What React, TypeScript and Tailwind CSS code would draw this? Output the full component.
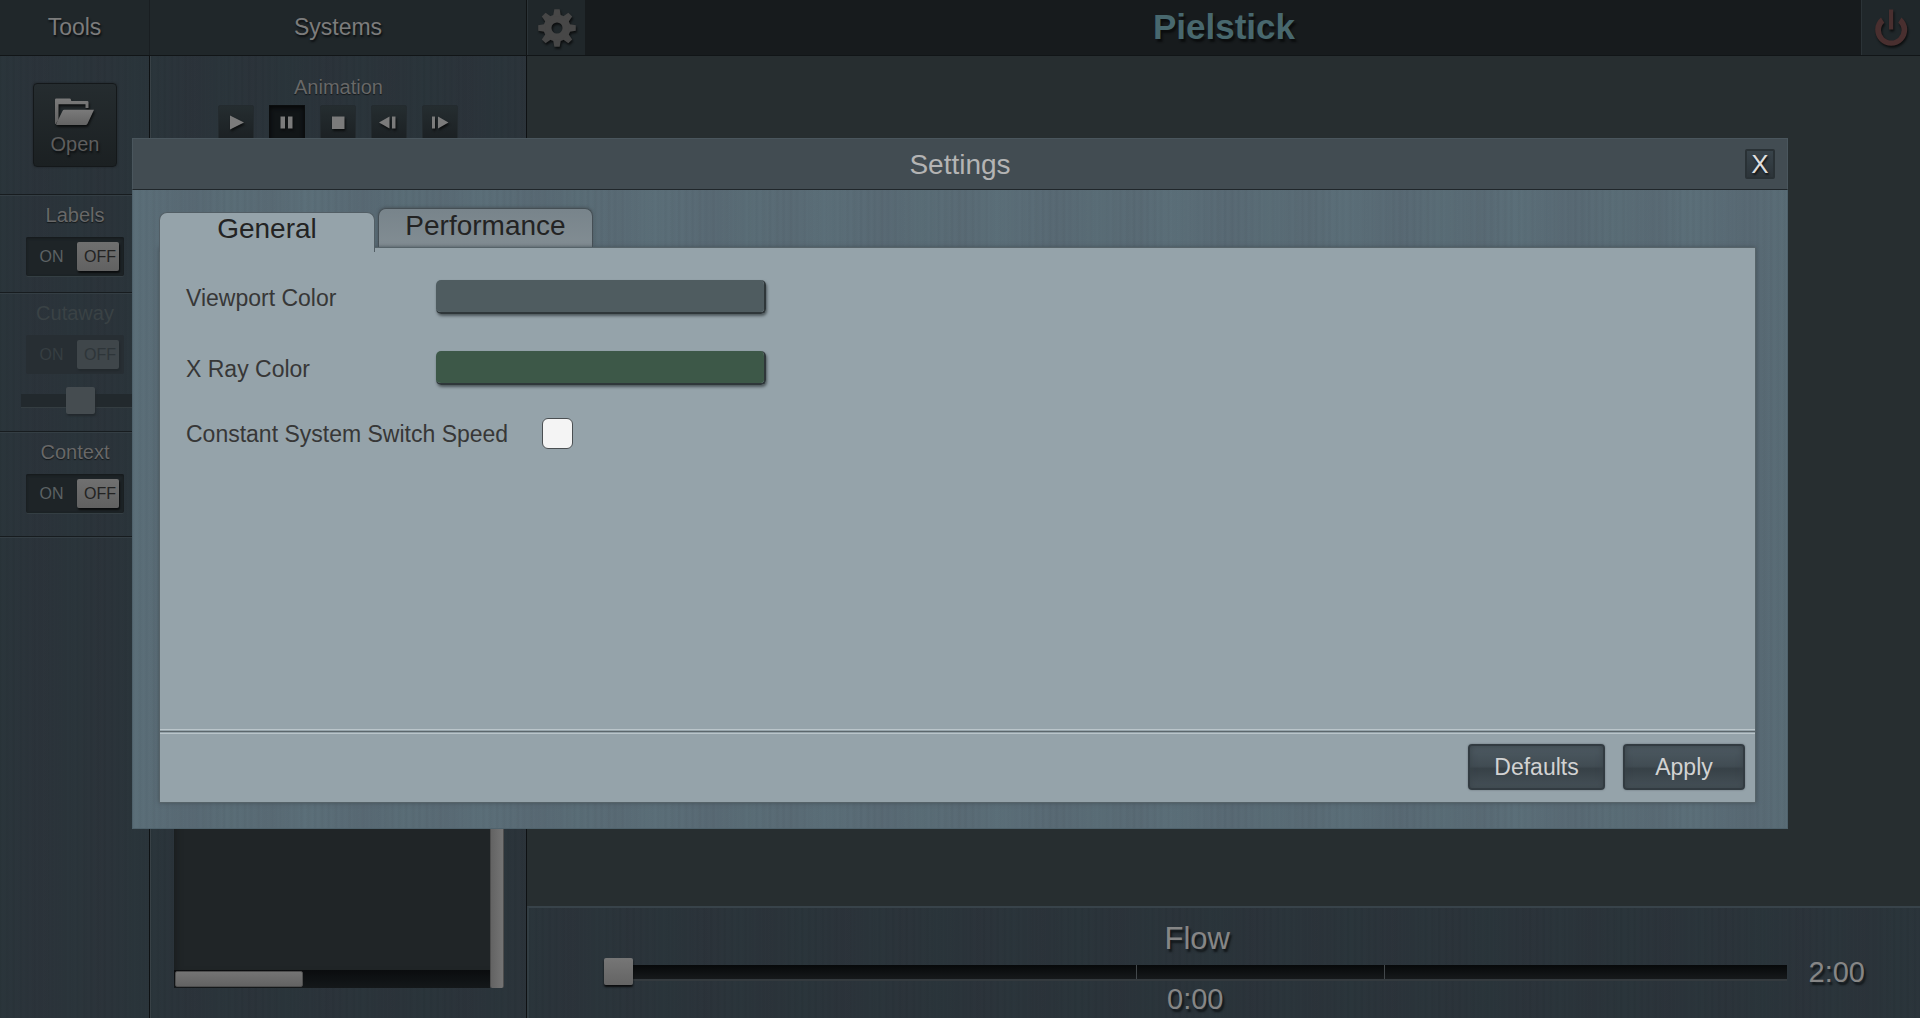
import React, { useState } from 'react';

const BRUSHED_DARK =
  'bg-[#2b343a] bg-[repeating-linear-gradient(90deg,rgba(36,62,68,0.1)_0px,rgba(46,46,60,0.14)_41px,rgba(40,62,70,0.1)_73px,rgba(46,46,60,0.1)_101px,rgba(36,62,68,0.1)_137px),repeating-linear-gradient(90deg,rgba(0,0,0,0.03)_0px,rgba(0,0,0,0)_2px,rgba(0,0,0,0)_5px,rgba(0,0,0,0.03)_7px),repeating-linear-gradient(90deg,rgba(0,0,0,0.03)_0px,rgba(0,0,0,0)_3px,rgba(0,0,0,0.02)_8px,rgba(0,0,0,0)_11px,rgba(0,0,0,0.03)_13px)]';

const BRUSHED_LIGHT =
  'bg-[#5a6c76] bg-[repeating-linear-gradient(90deg,rgba(100,130,140,0.14)_0px,rgba(80,90,104,0.14)_59px,rgba(90,116,124,0.16)_97px,rgba(84,96,108,0.12)_139px,rgba(100,130,140,0.14)_173px),repeating-linear-gradient(90deg,rgba(0,0,0,0.025)_0px,rgba(0,0,0,0)_2px,rgba(0,0,0,0)_5px,rgba(0,0,0,0.025)_7px),repeating-linear-gradient(90deg,rgba(0,0,0,0.025)_0px,rgba(0,0,0,0)_3px,rgba(0,0,0,0.02)_8px,rgba(0,0,0,0)_11px,rgba(0,0,0,0.025)_13px)]';

const SHADOW_TEXT = '[text-shadow:1px_2px_2px_#0c0f11]';

function GearIcon() {
  const teeth = [0, 45, 90, 135, 180, 225, 270, 315];
  return (
    <svg viewBox="0 0 40 40" className="size-10 drop-shadow-[1px_2px_1px_#0b0d0e]" aria-hidden="true">
      <g fill="#474747">
        <path fillRule="evenodd" d="M20 6.5a13.5 13.5 0 1 0 0 27a13.5 13.5 0 1 0 0-27ZM20 14.5a5.5 5.5 0 1 1 0 11a5.5 5.5 0 1 1 0-11Z" />
        {teeth.map((a) => (
          <path key={a} d="M17.3 1.2h5.4l1.3 7.3h-8Z" transform={`rotate(${a} 20 20)`} />
        ))}
      </g>
    </svg>
  );
}

function PowerIcon() {
  return (
    <svg viewBox="0 0 40 40" className="size-10 drop-shadow-[1px_2px_1px_#0b0d0e]" aria-hidden="true">
      <path fill="#492f2f" d="M18 1.5h4.2v20H18Z" />
      <path
        fill="#492f2f"
        d="M10 9.5a16 16 0 1 0 20.4 0l-3.1 5.2a10.3 10.3 0 1 1-14 0Z"
      />
    </svg>
  );
}

function FolderIcon() {
  return (
    <svg viewBox="0 0 40 28" className="h-7 w-10 overflow-visible drop-shadow-[1px_2px_1px_#0b0d0e]" aria-hidden="true">
      <defs>
        <linearGradient id="folder" x1="0" y1="0" x2="0" y2="1">
          <stop offset="0" stopColor="#7a7a7a" />
          <stop offset="1" stopColor="#636363" />
        </linearGradient>
      </defs>
      <path
        fill="url(#folder)"
        d="M0 26V1.8Q0 .5 1.3 .5H14.5Q15.8 .5 16 1.8L16.3 3H32.2Q33.5 3 33.5 4.3V10H30.5V6.2H3.5V22L.5 26Z"
      />
      <path fill="url(#folder)" d="M9.2 11.7H39L32.5 25.7Q31.9 27 30.5 27H1.8Q.6 27 1.3 25.6L7.5 13Q8.1 11.7 9.2 11.7Z" />
    </svg>
  );
}

const MEDIA_ICONS: { name: string; d: string }[] = [
  { name: 'Play', d: 'M12 10.5L26 17.5L12 24.5Z' },
  { name: 'Pause', d: 'M11.5 11.5H16V23.5H11.5ZM19 11.5H23.5V23.5H19Z' },
  { name: 'Stop', d: 'M12 11.5H24.5V24H12Z' },
  { name: 'Step back', d: 'M8 17.5L18.5 11.5V23.5ZM21 11.5H24.5V23.5H21Z' },
  { name: 'Step forward', d: 'M10 11.5H13V23.5H10ZM16 11.5L26.5 17.5L16 23.5Z' },
];

function MediaButton({ name, d, active }: { name: string; d: string; active: boolean }) {
  return (
    <button
      type="button"
      aria-label={name}
      className={
        active
          ? 'size-9 border border-[#0b0d0e] bg-[#111517] shadow-[inset_0_2px_4px_#060708]'
          : 'size-9 rounded-xs border border-[#242b2f] bg-linear-to-b from-[#252d30] to-[#1b2023]'
      }
    >
      <svg viewBox="1 1 34 34" className="size-full drop-shadow-[1px_2px_1px_#0b0d0e]" aria-hidden="true">
        <path fill="#7b7b7b" d={d} />
      </svg>
    </button>
  );
}

function Toggle({ label, disabled = false }: { label: string; disabled?: boolean }) {
  const [on, setOn] = useState(false);
  return (
    <button
      type="button"
      role="switch"
      aria-checked={on}
      aria-label={label}
      disabled={disabled}
      onClick={() => setOn(!on)}
      className={
        disabled
          ? 'flex h-[39px] w-[98px] items-center rounded-xs bg-[#272e33] pr-[5px] text-base text-[#363e42]'
          : 'flex h-[39px] w-[98px] items-center rounded-xs bg-[#1e2427] pr-[5px] text-base text-[#5c6264] shadow-[inset_0_1px_3px_#14181a,0_1px_0_#343e43]'
      }
    >
      <span className="flex-1">ON</span>
      <span
        className={
          disabled
            ? 'flex h-[29px] w-[42px] items-center justify-end rounded-xs bg-[#3f464a] pr-[3px] text-[#2e3539] shadow-[1px_2px_2px_#22292d]'
            : 'flex h-[29px] w-[42px] items-center justify-end rounded-xs bg-linear-to-b from-[#707070] to-[#616161] pr-[3px] text-[#232323] shadow-[1px_2px_2px_#0a0c0d]'
        }
      >
        OFF
      </span>
    </button>
  );
}

function ToolSection({ title, children, disabled = false }: { title: string; children: React.ReactNode; disabled?: boolean }) {
  return (
    <section className="flex flex-col items-center border-t border-b border-t-[#343e44] border-b-[#171c1f] pt-[7px] pr-[20px] pb-4 pl-[21px]">
      <h2
        className={
          disabled
            ? 'mb-[10px] text-xl leading-6 text-[#3a4245]'
            : 'mb-[10px] text-xl leading-6 text-[#686868] [text-shadow:0_1px_1px_#14181a]'
        }
      >
        {title}
      </h2>
      {children}
    </section>
  );
}

function TopBar() {
  return (
    <header className="flex h-14 shrink-0 border-b border-[#111517] bg-[#171b1d] text-[#7c7c7c]">
      <div className={`flex w-[149px] items-center justify-center bg-[#20272a] text-[23px] ${SHADOW_TEXT}`}>Tools</div>
      <div
        className={`flex w-[378px] items-center justify-center border-r border-l border-r-[#101314] border-l-[#191e21] bg-[#20272a] text-[23px] ${SHADOW_TEXT}`}
      >
        Systems
      </div>
      <button type="button" aria-label="Settings" className="flex w-[58px] items-center justify-center border-l border-[#2b3337] bg-[#20272a]">
        <GearIcon />
      </button>
      <h1 className="flex flex-1 items-center justify-center pl-[2px] text-[35px] font-bold text-[#48686e] [text-shadow:2px_3px_2px_#0b0d0e]">
        Pielstick
      </h1>
      <button type="button" aria-label="Exit" className="flex w-[59px] items-center justify-center border-l border-[#2b3337] bg-[#20272a]">
        <PowerIcon />
      </button>
    </header>
  );
}

function ToolsPanel() {
  return (
    <aside className={`flex w-[150px] shrink-0 flex-col border-r border-[#0e1113] ${BRUSHED_DARK}`}>
      <div className="flex justify-center border-b border-[#171c1f] pt-[27px] pb-[27px] pl-px">
        <button
          type="button"
          className={`flex size-[84px] flex-col items-center rounded-sm border border-[#14181a] bg-linear-to-b from-[#252c2f] to-[#1b2022] pt-[14px] text-xl leading-6 text-[#5e5e5e] shadow-[0_0_2px_#1b2022] ${SHADOW_TEXT}`}
        >
          <FolderIcon />
          <span className="pt-[6px]">Open</span>
        </button>
      </div>
      <ToolSection title="Labels">
        <Toggle label="Labels" />
      </ToolSection>
      <ToolSection title="Cutaway" disabled>
        <Toggle label="Cutaway" disabled />
        <input
          type="range"
          aria-label="Cutaway position"
          defaultValue={50}
          disabled
          className="mt-[13px] h-7 w-[118px] appearance-none self-start bg-transparent [&::-webkit-slider-runnable-track]:h-[14px] [&::-webkit-slider-runnable-track]:border-b [&::-webkit-slider-runnable-track]:border-[#343d41] [&::-webkit-slider-runnable-track]:bg-[#22292d] [&::-webkit-slider-thumb]:-mt-[7px] [&::-webkit-slider-thumb]:h-[27px] [&::-webkit-slider-thumb]:w-[29px] [&::-webkit-slider-thumb]:appearance-none [&::-webkit-slider-thumb]:rounded-xs [&::-webkit-slider-thumb]:bg-[#454c50] [&::-webkit-slider-thumb]:shadow-[1px_2px_2px_#22292d]"
        />
      </ToolSection>
      <ToolSection title="Context">
        <Toggle label="Context" />
        <div className="h-[7px]" />
      </ToolSection>
      <div className="flex-1 border-t border-[#343e44]" />
    </aside>
  );
}

function SystemsPanel() {
  return (
    <aside className={`flex w-[377px] shrink-0 flex-col border-r border-l border-r-[#0e1113] border-l-[#384146] ${BRUSHED_DARK}`}>
      <h2 className="pt-[19px] text-center text-xl leading-6 text-[#686868] [text-shadow:0_1px_1px_#14181a]">Animation</h2>
      <div className="flex justify-center gap-[15px] pt-[6px] pr-[2px]">
        {MEDIA_ICONS.map((icon) => (
          <MediaButton key={icon.name} name={icon.name} d={icon.d} active={icon.name === 'Pause'} />
        ))}
      </div>
      <div className="mt-6 mr-[22px] mb-[30px] ml-[23px] flex flex-1">
        <div className="flex flex-1 flex-col">
          <div className="flex-1 bg-[#202527] shadow-[inset_6px_0_6px_-4px_#191d1f]" />
          <div className="h-[18px] bg-linear-to-b from-[#0a0c0e] to-[#14181a] p-px">
            <div className="h-4 w-32 rounded-xs border border-[#4e4e4e] bg-linear-to-b from-[#747474] to-[#636363]" />
          </div>
        </div>
        <div className="w-[14px] rounded-xs border-x border-[#4e4e4e] bg-linear-to-r from-[#636363] to-[#747474]" />
      </div>
    </aside>
  );
}

function Timeline() {
  return (
    <section
      className={`flex h-28 shrink-0 items-start border-t-2 border-l-2 border-t-[#38434a] border-l-[#323d43] pr-[55px] pl-[75px] text-[#868686] ${BRUSHED_DARK}`}
    >
      <div className="flex flex-1 flex-col items-center pt-[13px]">
        <h2 className="pl-1 text-[31px] leading-9 [text-shadow:2px_3px_2px_#12171a]">Flow</h2>
        <div className="relative mt-px h-7 w-full">
          <input
            type="range"
            aria-label="Flow time"
            defaultValue={0}
            className="block h-7 w-full appearance-none bg-transparent [&::-webkit-slider-runnable-track]:h-[14px] [&::-webkit-slider-runnable-track]:bg-linear-to-b [&::-webkit-slider-runnable-track]:from-[#07090a] [&::-webkit-slider-runnable-track]:to-[#16191b] [&::-webkit-slider-runnable-track]:shadow-[0_2px_0_#343a3e] [&::-webkit-slider-thumb]:-mt-[7px] [&::-webkit-slider-thumb]:h-[27px] [&::-webkit-slider-thumb]:w-[29px] [&::-webkit-slider-thumb]:appearance-none [&::-webkit-slider-thumb]:rounded-xs [&::-webkit-slider-thumb]:bg-linear-to-b [&::-webkit-slider-thumb]:from-[#767676] [&::-webkit-slider-thumb]:to-[#646464] [&::-webkit-slider-thumb]:shadow-[0_2px_2px_#0b0d0e]"
          />
          <span className="pointer-events-none absolute top-[7px] left-[45%] h-[14px] w-px bg-[#43484b]" />
          <span className="pointer-events-none absolute top-[7px] left-[66%] h-[14px] w-px bg-[#43484b]" />
        </div>
        <span className="text-[29px] leading-[26px] [text-shadow:2px_3px_2px_#12171a]">0:00</span>
      </div>
      <span className="pt-12 pl-[22px] text-[29px] leading-8 [text-shadow:2px_3px_2px_#12171a]">2:00</span>
    </section>
  );
}

const SWATCH =
  'h-[34px] w-[330px] cursor-pointer appearance-none overflow-hidden rounded-[5px] border-r-2 border-b-2 border-[#2f373a] p-0 shadow-[1px_2px_3px_#4d575b] [&::-webkit-color-swatch-wrapper]:p-0 [&::-webkit-color-swatch]:border-0';

const DIALOG_BUTTON =
  'h-[46px] rounded-sm border-2 border-[#323b41] bg-[linear-gradient(#4d5a62,#414c53_48%,#374147_54%,#465158)] text-[23px] text-[#d2d2d2] shadow-[0_0_2px_#5f6b71,inset_0_0_6px_#3a444a]';

function SettingsDialog() {
  const [constantSpeed, setConstantSpeed] = useState(false);
  return (
    <div className="fixed inset-0 flex px-[132px] pt-[138px] pb-[189px]">
      <div role="dialog" aria-label="Settings" className="flex flex-1 flex-col">
        <header className="flex h-[52px] shrink-0 items-center border border-[#4a565d] border-b-[#20272b] bg-[#424c52] pr-3 pl-[42px]">
          <h2 className="flex-1 pt-[2px] text-center text-[28px] text-[#b4b4b4]">Settings</h2>
          <button
            type="button"
            aria-label="Close"
            className="flex size-[30px] items-center justify-center rounded-xs border-2 border-[#293135] bg-linear-to-b from-[#38434a] to-[#2c3439] text-[26px] text-[#dedede] [text-shadow:1px_2px_2px_#101315]"
          >
            X
          </button>
        </header>
        <div className={`flex flex-1 flex-col border border-t-0 border-[#4f626c] pt-[18px] pr-[31px] pb-[25px] pl-[26px] ${BRUSHED_LIGHT}`}>
          <div role="tablist" className="flex h-[39px] shrink-0 items-start gap-[3px] text-[28px] text-[#232323]">
            <button
              type="button"
              role="tab"
              aria-selected="true"
              className="relative z-10 mt-1 h-10 w-[216px] rounded-t-lg border border-b-0 border-[#525e65] bg-[#95a3aa] pb-2 leading-8"
            >
              General
            </button>
            <button
              type="button"
              role="tab"
              aria-selected="false"
              className="h-[39px] w-[215px] rounded-t-lg border border-b-0 border-[#454f55] bg-linear-to-b from-[#78848b] to-[#828d93] pb-[5px] leading-8 shadow-[0_-1px_3px_#4b575e]"
            >
              Performance
            </button>
          </div>
          <div role="tabpanel" className="flex flex-1 flex-col border border-[#566369] bg-[#95a3aa] shadow-[0_0_4px_#46525a]">
            <div className="grid flex-1 content-start text-[23px] text-[#373737]">
              <div className="grid grid-cols-[276px_1fr] items-center gap-y-9 pt-[31px]">
                <label htmlFor="viewport-color" className="pt-[3px] pl-[26px] leading-8">
                  Viewport Color
                </label>
                <input id="viewport-color" type="color" defaultValue="#4f5c60" className={SWATCH} />
                <label htmlFor="xray-color" className="pt-[3px] pl-[26px] leading-8">
                  X Ray Color
                </label>
                <input id="xray-color" type="color" defaultValue="#3d5848" className={SWATCH} />
              </div>
              <div className="flex items-center pt-[30px] pl-[26px]">
                <label htmlFor="constant-speed" className="w-[356px] pt-[2px]">
                  Constant System Switch Speed
                </label>
                <input
                  id="constant-speed"
                  type="checkbox"
                  checked={constantSpeed}
                  onChange={(e) => setConstantSpeed(e.target.checked)}
                  className="size-[31px] appearance-none rounded-md border border-[#4a4f52] bg-[#f4f4f4] checked:bg-[#4f5c60]"
                />
              </div>
            </div>
            <footer>
              <div className="border-y border-[#bac5ca] py-px">
                <div className="h-px bg-[#5c676c]" />
              </div>
              <div className="flex justify-end gap-[18px] pt-[10px] pr-[10px] pb-3">
                <button type="button" className={`w-[137px] ${DIALOG_BUTTON}`}>
                  Defaults
                </button>
                <button type="button" className={`w-[122px] ${DIALOG_BUTTON}`}>
                  Apply
                </button>
              </div>
            </footer>
          </div>
        </div>
      </div>
    </div>
  );
}

export default function App() {
  return (
    <div className="flex h-screen flex-col overflow-hidden bg-[#272e30] font-['Liberation_Sans',Arial,sans-serif]">
      <TopBar />
      <div className="flex min-h-0 flex-1">
        <ToolsPanel />
        <SystemsPanel />
        <main className="flex flex-1 flex-col">
          <div className="flex-1" />
          <Timeline />
        </main>
      </div>
      <SettingsDialog />
    </div>
  );
}
